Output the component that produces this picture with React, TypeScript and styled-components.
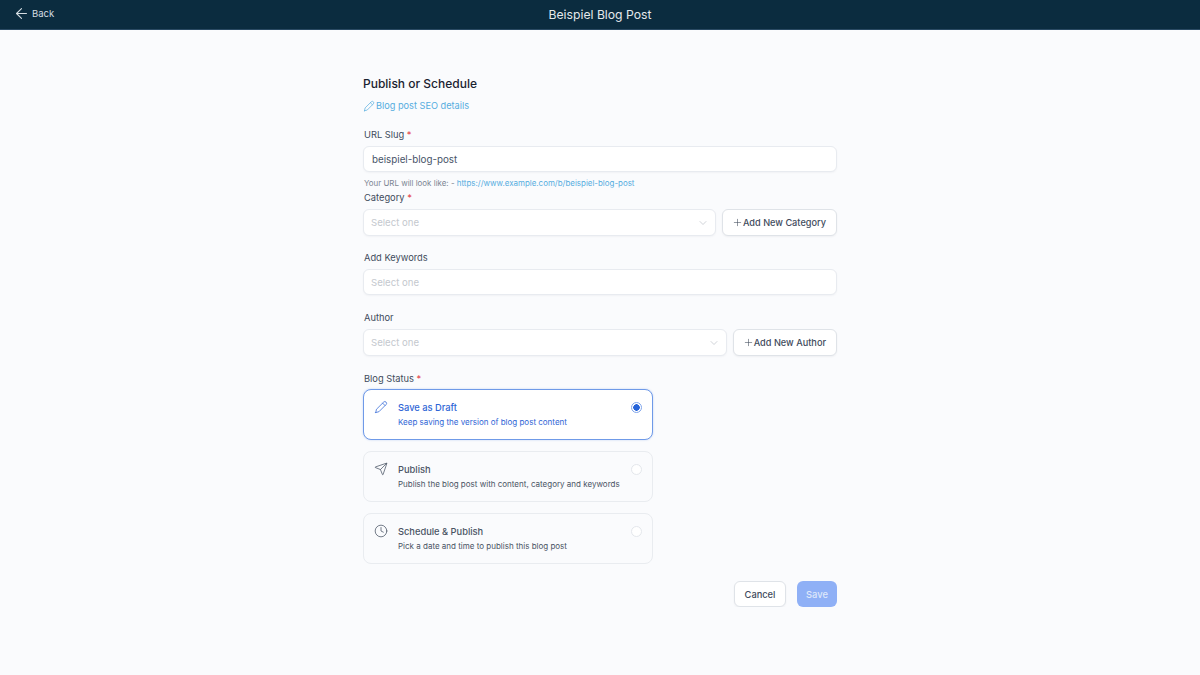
import React from 'react';
import styled, { createGlobalStyle } from 'styled-components';
import { ArrowLeft, ChevronDown, Clock, Plus, Send } from 'lucide-react';

const GlobalStyle = createGlobalStyle`
  * { box-sizing: border-box; }
  html, body { margin: 0; padding: 0; }
  body {
    background: #fafbfd;
    font-family: Inter, "Liberation Sans", sans-serif;
    color: #344054;
  }
`;

const Header = styled.header`
  height: 30px;
  background: #0b2c3f;
  border-bottom: 1px solid #2a4a63;
  display: grid;
  grid-template-columns: 1fr auto 1fr;
  align-items: center;
  color: #e8edf0;
`;

const BackLink = styled.a`
  display: flex;
  align-items: center;
  gap: 2px;
  padding: 0 0 4px 13px;
  font-size: 9.5px;
  color: #d5dde2;
`;

const PageTitle = styled.h1`
  margin: 0;
  font-size: 12.2px;
  font-weight: 400;
  color: #e4e9ec;
  line-height: 30px;
`;

const Form = styled.main`
  width: 474px;
  margin: 0 auto;
  padding-top: 46px;
  display: flex;
  flex-direction: column;
`;

const Title = styled.h2`
  margin: 0;
  font-size: 12px;
  line-height: 16px;
  font-weight: 500;
  color: #1a2230;
`;

const SeoLink = styled.a`
  display: flex;
  align-items: center;
  gap: 1px;
  margin-top: 7px;
  font-size: 9.2px;
  line-height: 14px;
  color: #56addf;
`;

const Field = styled.div<{ $top: number }>`
  margin-top: ${(p) => p.$top}px;
  display: flex;
  flex-direction: column;
`;

const Label = styled.label`
  padding-left: 1px;
  margin-bottom: 4px;
  font-size: 9.3px;
  line-height: 14px;
  color: #414b5c;
`;

const Required = styled.span`
  color: #e5484d;
`;

const Row = styled.div`
  display: flex;
  gap: 6px;
`;

const Control = styled.div<{ $tall?: boolean }>`
  flex: 1 0 auto;
  height: ${(p) => (p.$tall ? 27 : 26)}px;
  display: flex;
  align-items: center;
  justify-content: space-between;
  padding: 0 6px 0 7px;
  background: #fff;
  border: 1px solid #e8ebf0;
  border-radius: 6px;
  box-shadow: 0 1px 2px rgba(16, 24, 40, 0.04);
  font-size: 9.6px;
  color: #c4c8ce;
`;

const SlugValue = styled.span`
  padding-left: 1px;
  font-size: 9.8px;
  color: #475467;
`;

const Hint = styled.p`
  margin: 5px 0 0;
  padding-left: 1px;
  font-size: 7.95px;
  line-height: 12px;
  color: #7c8593;
`;

const HintLink = styled.span`
  color: #56addf;
`;

const AddButton = styled.button`
  height: 27px;
  display: flex;
  align-items: center;
  gap: 0;
  padding: 0 10px 0 9px;
  background: #fff;
  border: 1px solid #dfe3e8;
  border-radius: 6px;
  box-shadow: 0 1px 2px rgba(16, 24, 40, 0.05);
  font: 500 9.2px Inter, sans-serif;
  color: #414b5c;
`;

const StatusList = styled.div`
  width: 290px;
  margin-top: -1px;
  display: flex;
  flex-direction: column;
  gap: 11px;
`;

const StatusCard = styled.div<{ $active?: boolean }>`
  height: 51px;
  display: flex;
  align-items: flex-start;
  gap: 10px;
  padding: 10px 10px 0 10px;
  background: ${(p) => (p.$active ? '#fff' : 'transparent')};
  border: 1px solid ${(p) => (p.$active ? '#6f9ae8' : '#e9ecf0')};
  border-radius: 8px;
  box-shadow: ${(p) => (p.$active ? '0 0 2px rgba(47, 102, 214, 0.3)' : 'none')};
  color: ${(p) => (p.$active ? '#2f66d6' : '#4a5464')};
`;

const StatusText = styled.div`
  flex: 1;
  padding-top: 1px;
`;

const StatusName = styled.div`
  font-size: 9.3px;
  line-height: 14px;
  font-weight: 500;
`;

const StatusDesc = styled.div`
  font-size: 8px;
  line-height: 14px;
`;

const Radio = styled.span<{ $checked?: boolean }>`
  width: 11px;
  height: 11px;
  margin-top: 2px;
  border-radius: 50%;
  background: ${(p) => (p.$checked ? 'radial-gradient(circle, #2563d9 0 3px, #fff 3.5px)' : '#fff')};
  border: 1px solid ${(p) => (p.$checked ? '#7fa5ec' : '#e4e7ec')};
`;

const Actions = styled.div`
  margin-top: 17px;
  display: flex;
  justify-content: flex-end;
  gap: 11px;
`;

const CancelButton = styled.button`
  width: 52px;
  height: 26px;
  background: #fff;
  border: 1px solid #dfe3e8;
  border-radius: 6px;
  box-shadow: 0 1px 2px rgba(16, 24, 40, 0.05);
  font: 500 9.3px Inter, sans-serif;
  color: #414b5c;
`;

const SaveButton = styled.button`
  width: 40px;
  height: 26px;
  background: #8fb0f6;
  border: none;
  border-radius: 6px;
  font: 500 9.3px Inter, sans-serif;
  color: #dfe8fb;
`;

// rounded pencil, the lucide one has a harder tip than the reference
const PencilIcon = ({ size = 14, strokeWidth = 1.3 }: { size?: number; strokeWidth?: number }) => (
  <svg
    width={size}
    height={size}
    viewBox="0 0 24 24"
    fill="none"
    stroke="currentColor"
    strokeWidth={strokeWidth}
    strokeLinecap="round"
    strokeLinejoin="round"
  >
    <path d="M3 21.5l1.2-5.6L16.5 3.6a3 3 0 0 1 4.2 0 3 3 0 0 1 0 4.2L8.4 20.1 3 21.5z" />
    <path d="M14.8 5.4l4 4" />
  </svg>
);

const Req = () => <Required> *</Required>;

const statuses = [
  { name: 'Save as Draft', desc: 'Keep saving the version of blog post content', Icon: PencilIcon, active: true },
  { name: 'Publish', desc: 'Publish the blog post with content, category and keywords', Icon: Send, active: false },
  { name: 'Schedule & Publish', desc: 'Pick a date and time to publish this blog post', Icon: Clock, active: false },
];

export default function App() {
  return (
    <>
      <GlobalStyle />
      <Header>
        <BackLink>
          <ArrowLeft size={17} strokeWidth={1.5} />
          Back
        </BackLink>
        <PageTitle>Beispiel Blog Post</PageTitle>
        <span />
      </Header>
      <Form>
        <Title>Publish or Schedule</Title>
        <SeoLink>
          <PencilIcon size={12} strokeWidth={1.4} />
          Blog post SEO details
        </SeoLink>
        <Field $top={15}>
          <Label>URL Slug<Req /></Label>
          <Control><SlugValue>beispiel-blog-post</SlugValue></Control>
          <Hint>
            Your URL will look like: - <HintLink>https://www.example.com/b/beispiel-blog-post</HintLink>
          </Hint>
        </Field>
        <Field $top={2}>
          <Label>Category<Req /></Label>
          <Row>
            <Control $tall>
              Select one
              <ChevronDown size={12} strokeWidth={1.1} color="#a8aeb8" />
            </Control>
            <AddButton><Plus size={11} strokeWidth={1.25} />Add New Category</AddButton>
          </Row>
        </Field>
        <Field $top={15}>
          <Label>Add Keywords</Label>
          <Control>Select one</Control>
        </Field>
        <Field $top={16}>
          <Label>Author</Label>
          <Row>
            <Control $tall>
              Select one
              <ChevronDown size={12} strokeWidth={1.1} color="#a8aeb8" />
            </Control>
            <AddButton><Plus size={11} strokeWidth={1.25} />Add New Author</AddButton>
          </Row>
        </Field>
        <Field $top={16}>
          <Label>Blog Status<Req /></Label>
          <StatusList>
            {statuses.map(({ name, desc, Icon, active }) => (
              <StatusCard key={name} $active={active}>
                <Icon size={14} strokeWidth={1.3} />
                <StatusText>
                  <StatusName>{name}</StatusName>
                  <StatusDesc>{desc}</StatusDesc>
                </StatusText>
                <Radio $checked={active} />
              </StatusCard>
            ))}
          </StatusList>
        </Field>
        <Actions>
          <CancelButton>Cancel</CancelButton>
          <SaveButton>Save</SaveButton>
        </Actions>
      </Form>
    </>
  );
}
